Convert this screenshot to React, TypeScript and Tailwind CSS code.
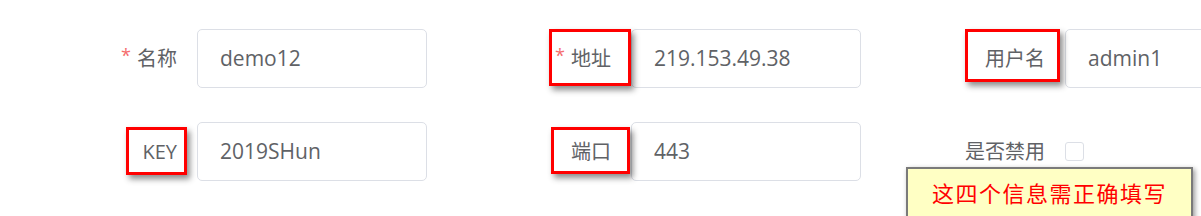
import React from "react";

type Box = { left: number; top: number; w: number; h: number };

function Item({
  label,
  value,
  required,
  box,
  checkbox,
}: {
  label: string;
  value?: string;
  required?: boolean;
  box?: Box;
  checkbox?: boolean;
}) {
  return (
    <div className="relative flex items-center h-[59px]">
      <div className="w-[120px] shrink-0 pr-[20px] text-right text-[20px] leading-none text-[#606266] whitespace-nowrap">
        {required && <span className="text-[#f56c6c] text-[18px] mr-[6px] relative top-[-4px]">*</span>}
        {label}
      </div>
      {checkbox ? (
        <div className="w-[19px] h-[19px] border border-[#dcdfe6] rounded-[3px] bg-white" />
      ) : (
        <div className="w-[230px] h-[59px] shrink-0 border border-[#dcdfe6] rounded-[5px] px-[22px] flex items-center text-[21px] text-[#606266] bg-white">
          {value}
        </div>
      )}
      {box && (
        <div
          className="absolute border-[3px] border-[#ff0000] shadow-[3px_4px_6px_rgba(0,0,0,0.45)] pointer-events-none"
          style={{ left: box.left, top: box.top, width: box.w, height: box.h }}
        />
      )}
    </div>
  );
}

export default function App() {
  return (
    <div
      className="relative w-[1201px] h-[216px] overflow-hidden bg-white"
      style={{ fontFamily: '"Open Sans", "Noto Sans CJK SC", sans-serif' }}
    >
      <div className="pt-[29px] pl-[77px] grid grid-cols-[434px_434px_434px] gap-y-[34px]">
        <Item label="名称" value="demo12" required />
        <Item label="地址" value="219.153.49.38" required box={{ left: 38, top: 0, w: 82, h: 57 }} />
        <Item label="用户名" value="admin1" box={{ left: 20, top: 0, w: 95, h: 53 }} />
        <Item label="KEY" value="2019SHun" box={{ left: 49, top: 5, w: 61, h: 48 }} />
        <Item label="端口" value="443" box={{ left: 40, top: 5, w: 79, h: 47 }} />
        <Item label="是否禁用" checkbox />
      </div>
      <div className="absolute left-[906px] top-[167px] w-[287px] h-[60px] bg-[#ffffc4] border-2 border-[#7a7a7a] shadow-[2px_2px_5px_rgba(0,0,0,0.4)] flex justify-center pt-[8px]">
        <span
          className="text-[22px] leading-[30px] tracking-[1.5px] text-[#ff0000]"
          style={{ fontFamily: '"Noto Sans CJK SC", sans-serif' }}
        >
          这四个信息需正确填写
        </span>
      </div>
    </div>
  );
}
